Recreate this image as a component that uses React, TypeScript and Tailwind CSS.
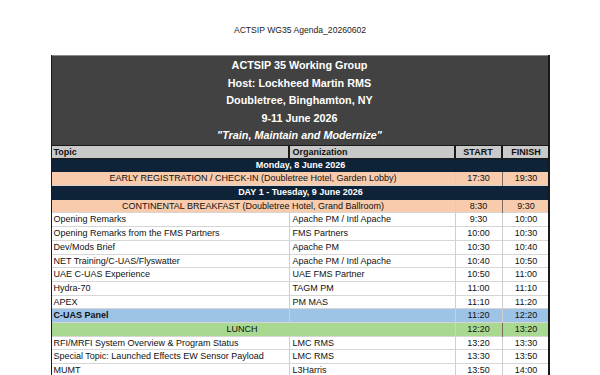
import React from 'react'

type Row =
  | { kind: 'item'; topic: string; org: string; start: string; finish: string; bg?: string; bold?: boolean }
  | { kind: 'day'; label: string }
  | { kind: 'event'; label: string; start: string; finish: string; bg: string; shift?: string }

const ROWS: Row[] = [
  { kind: 'day', label: 'Monday, 8 June 2026' },
  { kind: 'event', label: 'EARLY REGISTRATION / CHECK-IN (Doubletree Hotel, Garden Lobby)', start: '17:30', finish: '19:30', bg: 'bg-[#f8cbad]' },
  { kind: 'day', label: 'DAY 1 - Tuesday, 9 June 2026' },
  { kind: 'event', label: 'CONTINENTAL BREAKFAST (Doubletree Hotel, Grand Ballroom)', start: '8:30', finish: '9:30', bg: 'bg-[#f8cbad]' },
  { kind: 'item', topic: 'Opening Remarks', org: 'Apache PM / Intl Apache', start: '9:30', finish: '10:00' },
  { kind: 'item', topic: 'Opening Remarks from the FMS Partners', org: 'FMS Partners', start: '10:00', finish: '10:30' },
  { kind: 'item', topic: 'Dev/Mods Brief', org: 'Apache PM', start: '10:30', finish: '10:40' },
  { kind: 'item', topic: 'NET Training/C-UAS/Flyswatter', org: 'Apache PM / Intl Apache', start: '10:40', finish: '10:50' },
  { kind: 'item', topic: 'UAE C-UAS Experience', org: 'UAE FMS Partner', start: '10:50', finish: '11:00' },
  { kind: 'item', topic: 'Hydra-70', org: 'TAGM PM', start: '11:00', finish: '11:10' },
  { kind: 'item', topic: 'APEX', org: 'PM MAS', start: '11:10', finish: '11:20' },
  { kind: 'item', topic: 'C-UAS Panel', org: '', start: '11:20', finish: '12:20', bg: 'bg-[#9dc3e6]', bold: true },
  { kind: 'event', label: 'LUNCH', start: '12:20', finish: '13:20', bg: 'bg-[#a9d991]', shift: 'pr-[22px]' },
  { kind: 'item', topic: 'RFI/MRFI System Overview & Program Status', org: 'LMC RMS', start: '13:20', finish: '13:30' },
  { kind: 'item', topic: 'Special Topic: Launched Effects EW Sensor Payload', org: 'LMC RMS', start: '13:30', finish: '13:50' },
  { kind: 'item', topic: 'MUMT', org: 'L3Harris', start: '13:50', finish: '14:00' },
]

const GRID = 'grid grid-cols-[238px_166px_47px_47px] h-[13.7px] leading-[13.7px]'

function AgendaRow({ row }: { row: Row }) {
  if (row.kind === 'day') {
    return (
      <div className={`${GRID} bg-[#0e2238] text-white font-bold text-center border-b border-[#0e2238]`}>
        <div className="col-span-4">{row.label}</div>
      </div>
    )
  }
  if (row.kind === 'event') {
    return (
      <div className={`${GRID} ${row.bg} text-center border-b border-[#d6d6d6]`}>
        <div className={`col-span-2 border-r border-[#d0d0d0] ${row.shift ?? ''}`}>{row.label}</div>
        <div className="border-r border-[#7a6a60]">{row.start}</div>
        <div>{row.finish}</div>
      </div>
    )
  }
  return (
    <div className={`${GRID} ${row.bg ?? 'bg-white'} border-b border-[#d6d6d6]`}>
      <div className={`pl-[2px] border-r border-[#cfcfcf] whitespace-nowrap ${row.bold ? 'font-bold' : ''}`}>{row.topic}</div>
      <div className="pl-[3px] border-r border-[#cfcfcf] whitespace-nowrap">{row.org}</div>
      <div className="text-center border-r border-[#cfcfcf]">{row.start}</div>
      <div className="text-center">{row.finish}</div>
    </div>
  )
}

export default function App() {
  return (
    <div className="w-[600px] h-[375px] overflow-hidden bg-white font-['Liberation_Sans',Arial,sans-serif] text-[#111]">
      <div className="pt-[24px] h-[55px] text-center text-[8.6px] text-[#222]">ACTSIP WG35 Agenda_20260602</div>

      <div className="w-[499px] mx-auto border-l border-r-2 border-[#1a1a1a]">
        {/* title block */}
        <div className="h-[90px] pt-[1px] bg-[#424242] text-white text-center font-bold text-[10.8px] leading-[17.6px] border-t border-[#8a8a8a]">
          <div>ACTSIP 35 Working Group</div>
          <div>Host: Lockheed Martin RMS</div>
          <div>Doubletree, Binghamton, NY</div>
          <div>9-11 June 2026</div>
          <div className="italic">"Train, Maintain and Modernize"</div>
        </div>

        <div className="text-[9px]">
          {/* column headings */}
          <div className={`${GRID} bg-[#c9c9c9] font-bold border-y border-[#1a1a1a]`}>
            <div className="pl-[2px] border-r-2 border-[#1a1a1a]">Topic</div>
            <div className="pl-[3px] border-r-2 border-[#1a1a1a]">Organization</div>
            <div className="text-center border-r-2 border-[#1a1a1a]">START</div>
            <div className="text-center">FINISH</div>
          </div>
          {ROWS.map((row, i) => (
            <AgendaRow key={i} row={row} />
          ))}
        </div>
      </div>
    </div>
  )
}
